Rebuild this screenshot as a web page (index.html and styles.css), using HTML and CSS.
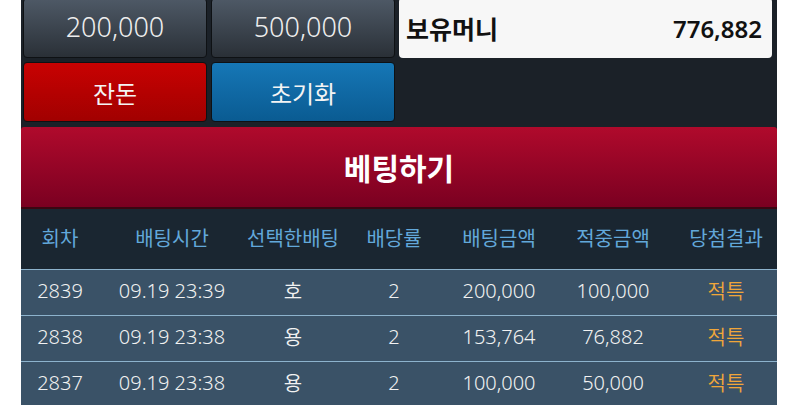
FILE: index.html
```html
<!DOCTYPE html>
<html lang="ko">
<head>
<meta charset="utf-8">
<link rel="stylesheet" href="styles.css">
</head>
<body>
<div class="wrap">
  <div class="controls">
    <div class="btn btn-gray">200,000</div>
    <div class="btn btn-gray">500,000</div>
    <div class="money"><span class="money-label">보유머니</span><span class="money-value">776,882</span></div>
    <div class="btn btn-red">잔돈</div>
    <div class="btn btn-blue">초기화</div>
  </div>
  <div class="bet">베팅하기</div>
  <div class="table">
    <div class="row head">
      <div>회차</div><div>배팅시간</div><div>선택한배팅</div><div>배당률</div><div>배팅금액</div><div>적중금액</div><div>당첨결과</div>
    </div>
    <div class="row item">
      <div>2839</div><div>09.19 23:39</div><div>호</div><div>2</div><div>200,000</div><div>100,000</div><div class="result">적특</div>
    </div>
    <div class="row item">
      <div>2838</div><div>09.19 23:38</div><div>용</div><div>2</div><div>153,764</div><div>76,882</div><div class="result">적특</div>
    </div>
    <div class="row item">
      <div>2837</div><div>09.19 23:38</div><div>용</div><div>2</div><div>100,000</div><div>50,000</div><div class="result">적특</div>
    </div>
  </div>
</div>
</body>
</html>
```

FILE: styles.css
```css
html, body {
  margin: 0;
  padding: 0;
  background: #ffffff;
  overflow: hidden;
}
body {
  font-family: "Noto Sans", "Noto Sans CJK KR", sans-serif;
}
.wrap {
  margin-left: 21px;
  width: 756px;
  height: 420px;
  background: #1b2128;
}
.controls {
  display: grid;
  grid-template-columns: 184px 184px 1fr;
  grid-template-rows: 60px 60px;
  gap: 4px;
  padding: 0 5px 0 2px;
  margin-top: -2px;
}
.btn {
  display: flex;
  align-items: center;
  justify-content: center;
  border-radius: 4px;
  color: #eeeeee;
  box-sizing: border-box;
  border: 1px solid #0e1114;
}
.btn-gray {
  background: linear-gradient(#4e5966, #2a3037);
  font-size: 27px;
  font-weight: 350;
  padding-bottom: 3px;
}
.btn-red {
  background: linear-gradient(#c80202, #a10000);
  font-size: 24px;
  color: #f4f4f4;
}
.btn-blue {
  background: linear-gradient(#1677b6, #0a5b92);
  font-size: 24px;
  color: #f4f4f4;
}
.money {
  background: #f7f7f7;
  border-radius: 4px;
  display: flex;
  align-items: center;
  justify-content: space-between;
  padding: 0 10px 0 7px;
  color: #111111;
  font-size: 24px;
  font-weight: 600;
}
.money-label {
  font-size: 25px;
}
.money-value {
  font-weight: 600;
}
.bet {
  margin-top: 5px;
  height: 80px;
  border-bottom: 2px solid #3a0612;
  border-radius: 3px 3px 0 0;
  background: linear-gradient(#b00a2c, #7a0021);
  display: flex;
  align-items: center;
  justify-content: center;
  color: #ffffff;
  font-size: 30px;
  font-weight: 700;
}
.table {
  width: 756px;
}
.row {
  display: grid;
  grid-template-columns: 78px 146px 96px 106px 104px 124px 102px;
  text-align: center;
  align-items: center;
}
.head {
  height: 60px;
  box-sizing: border-box;
  padding-bottom: 3px;
  background: #1a2631;
  color: #62a8da;
  font-size: 20px;
}
.item {
  height: 45px;
  border-top: 1px solid #8db3cd;
  background: #3a5267;
  color: #f2f2f2;
  font-size: 20px;
  font-weight: 350;
}
.item > div {
  padding-bottom: 4px;
}
.result {
  color: #f0a63a;
}
```
